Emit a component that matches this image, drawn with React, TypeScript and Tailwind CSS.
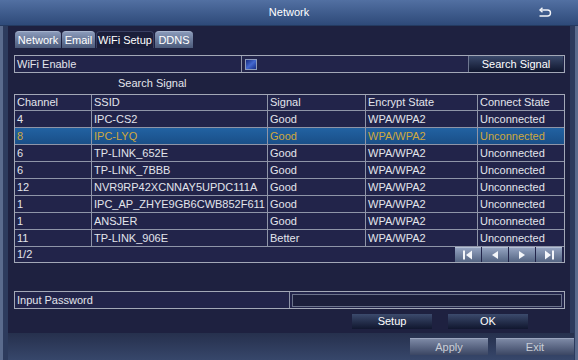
import React from 'react';

type Row = { ch: string; ssid: string; signal: string; enc: string; state: string };

const rows: Row[] = [
  { ch: '4', ssid: 'IPC-CS2', signal: 'Good', enc: 'WPA/WPA2', state: 'Unconnected' },
  { ch: '8', ssid: 'IPC-LYQ', signal: 'Good', enc: 'WPA/WPA2', state: 'Unconnected' },
  { ch: '6', ssid: 'TP-LINK_652E', signal: 'Good', enc: 'WPA/WPA2', state: 'Unconnected' },
  { ch: '6', ssid: 'TP-LINK_7BBB', signal: 'Good', enc: 'WPA/WPA2', state: 'Unconnected' },
  { ch: '12', ssid: 'NVR9RP42XCNNAY5UPDC111A', signal: 'Good', enc: 'WPA/WPA2', state: 'Unconnected' },
  { ch: '1', ssid: 'IPC_AP_ZHYE9GB6CWB852F611', signal: 'Good', enc: 'WPA/WPA2', state: 'Unconnected' },
  { ch: '1', ssid: 'ANSJER', signal: 'Good', enc: 'WPA/WPA2', state: 'Unconnected' },
  { ch: '11', ssid: 'TP-LINK_906E', signal: 'Better', enc: 'WPA/WPA2', state: 'Unconnected' },
];

const tabs = ['Network', 'Email', 'WiFi Setup', 'DDNS'];
const tabWidths = ['w-[46px]', 'w-[33px]', 'w-[58px]', 'w-[38px]'];

function ReturnIcon() {
  return (
    <svg width="14" height="11" viewBox="0 0 14 11" fill="none" stroke="#f2f4f8" strokeWidth="1.4">
      <path d="M2 3 H9.5 A3 3 0 0 1 9.5 9 H1.5" />
      <path d="M4.5 0.8 L2 3 L4.5 5.2" />
    </svg>
  );
}

function PageButton({ kind }: { kind: 'first' | 'prev' | 'next' | 'last' }) {
  return (
    <button className="w-[26px] h-[15px] flex items-center justify-center bg-gradient-to-b from-[#93a2bf] to-[#556583] border-t border-[#b4c0d6]">
      <svg width="12" height="10" viewBox="0 0 12 10" fill="#f4f6fa">
        {kind === 'first' && (
          <>
            <rect x="1" y="0.5" width="2" height="9" />
            <path d="M10 0.5 L4 5 L10 9.5 Z" />
          </>
        )}
        {kind === 'prev' && <path d="M9 1 L3 5 L9 9 Z" />}
        {kind === 'next' && <path d="M3 1 L9 5 L3 9 Z" />}
        {kind === 'last' && (
          <>
            <path d="M2 0.5 L8 5 L2 9.5 Z" />
            <rect x="9" y="0.5" width="2" height="9" />
          </>
        )}
      </svg>
    </button>
  );
}

export default function App() {
  return (
    <div
      className="w-[578px] h-[360px] flex flex-col overflow-hidden text-[11px] text-[#e3e5ec] bg-[#2d3b5d]"
      style={{ fontFamily: '"Liberation Sans", Arial, sans-serif' }}
    >
      {/* Title bar */}
      <div className="h-[26px] shrink-0 grid grid-cols-[1fr_auto_1fr] items-center bg-gradient-to-b from-[#5270a2] to-[#2e4a79] border-b border-[#243a60]">
        <div />
        <span className="text-white">Network</span>
        <div className="flex justify-end pr-[26px]">
          <ReturnIcon />
        </div>
      </div>

      {/* Body */}
      <div className="flex-1 flex flex-col border-x-[3px] border-[#5a6b8d] px-[5px]">
        <div className="h-[307px] flex flex-col bg-[#1e2140] pl-[6px] pr-[5px]">
          {/* Tabs */}
          <div className="mt-[5px] h-[17px] flex gap-[1px] pl-[1px]">
            {tabs.map((t, i) => (
              <div
                key={t}
                className={
                  'h-full flex items-center justify-center rounded-t-[4px] text-white ' +
                  tabWidths[i] +
                  (t === 'WiFi Setup'
                    ? ' bg-[#1b1e3a] border-t border-x border-[#3a4062]'
                    : ' bg-gradient-to-b from-[#8a9aba] to-[#4c5b7b] border-t border-[#a4b2cc]')
                }
              >
                {t}
              </div>
            ))}
          </div>

          {/* WiFi Enable */}
          <div className="mt-[7px] h-[18px] flex items-center border border-[#a3a8b7] bg-[#22244a]">
            <div className="w-[227px] h-full flex items-center pl-[2px] border-r border-[#8f95a8]">WiFi Enable</div>
            <div className="flex-1 h-full flex items-center pl-[3px]">
              <span className="w-[12px] h-[11px] border border-[#8d9aba] bg-gradient-to-br from-[#162a7e] via-[#4468d0] to-[#182c84]" />
            </div>
            <button className="w-[95px] h-[16px] mr-[1px] flex items-center justify-center text-white bg-gradient-to-b from-[#3b4a6c] to-[#10162e] border-l border-[#6f7791]">
              Search Signal
            </button>
          </div>

          {/* Search Signal label */}
          <div className="h-[21px] flex items-center pl-[104px]">Search Signal</div>

          {/* Table */}
          <div className="border border-[#a3a8b7] bg-[#22244a]">
            <div className="h-[16px] flex border-b border-[#8f95a8]">
              <div className="w-[77px] pl-[2px] flex items-center border-r border-[#8f95a8]">Channel</div>
              <div className="w-[176px] pl-[2px] flex items-center border-r border-[#8f95a8]">SSID</div>
              <div className="w-[98px] pl-[2px] flex items-center border-r border-[#8f95a8]">Signal</div>
              <div className="w-[112px] pl-[2px] flex items-center border-r border-[#8f95a8]">Encrypt State</div>
              <div className="flex-1 pl-[2px] flex items-center">Connect State</div>
            </div>
            {rows.map((r, i) => {
              const sel = i === 1;
              return (
                <div
                  key={i}
                  className={
                    'h-[17px] flex border-b border-[#8f95a8] ' +
                    (sel ? 'bg-gradient-to-b from-[#2262a2] to-[#1a4f88] text-[#cfa83e]' : '')
                  }
                >
                  <div className="w-[77px] pl-[2px] flex items-center border-r border-[#8f95a8]">{r.ch}</div>
                  <div className="w-[176px] pl-[2px] flex items-center border-r border-[#8f95a8]">{r.ssid}</div>
                  <div className="w-[98px] pl-[2px] flex items-center border-r border-[#8f95a8]">{r.signal}</div>
                  <div className="w-[112px] pl-[2px] flex items-center border-r border-[#8f95a8]">{r.enc}</div>
                  <div className="flex-1 pl-[2px] flex items-center">{r.state}</div>
                </div>
              );
            })}
            <div className="h-[15px] flex items-center justify-between pl-[2px] pr-[2px]">
              <span>1/2</span>
              <div className="flex gap-[1px]">
                <PageButton kind="first" />
                <PageButton kind="prev" />
                <PageButton kind="next" />
                <PageButton kind="last" />
              </div>
            </div>
          </div>

          {/* Input Password */}
          <div className="mt-[28px] h-[18px] flex items-center border border-[#a3a8b7] bg-[#22244a]">
            <div className="w-[275px] h-full flex items-center pl-[2px] border-r border-[#8f95a8]">Input Password</div>
            <div className="flex-1 h-full flex items-center px-[2px]">
              <div className="w-full h-[13px] border border-[#6c738c] bg-[#1c1f3c]" />
            </div>
          </div>

          {/* Setup / OK */}
          <div className="mt-[5px] flex justify-end gap-[16px] pr-[37px]">
            <button className="w-[80px] h-[15px] flex items-center justify-center text-white bg-gradient-to-b from-[#3c4b6d] to-[#11172f]">
              Setup
            </button>
            <button className="w-[80px] h-[15px] flex items-center justify-center text-white bg-gradient-to-b from-[#3c4b6d] to-[#11172f]">
              OK
            </button>
          </div>
        </div>

        {/* Footer */}
        <div className="flex-1 flex justify-end items-start gap-[8px] pt-[5px] -mr-[4px] bg-gradient-to-b from-[#26304d] to-[#37476b]">
          <button className="w-[78px] h-[17px] flex items-center justify-center text-[#c9cdd6] bg-gradient-to-b from-[#7d89a5] to-[#3b4663] border-t border-[#9aa5be]">
            Apply
          </button>
          <button className="w-[78px] h-[17px] flex items-center justify-center text-[#c9cdd6] bg-gradient-to-b from-[#7d89a5] to-[#3b4663] border-t border-[#9aa5be]">
            Exit
          </button>
        </div>
      </div>
    </div>
  );
}
